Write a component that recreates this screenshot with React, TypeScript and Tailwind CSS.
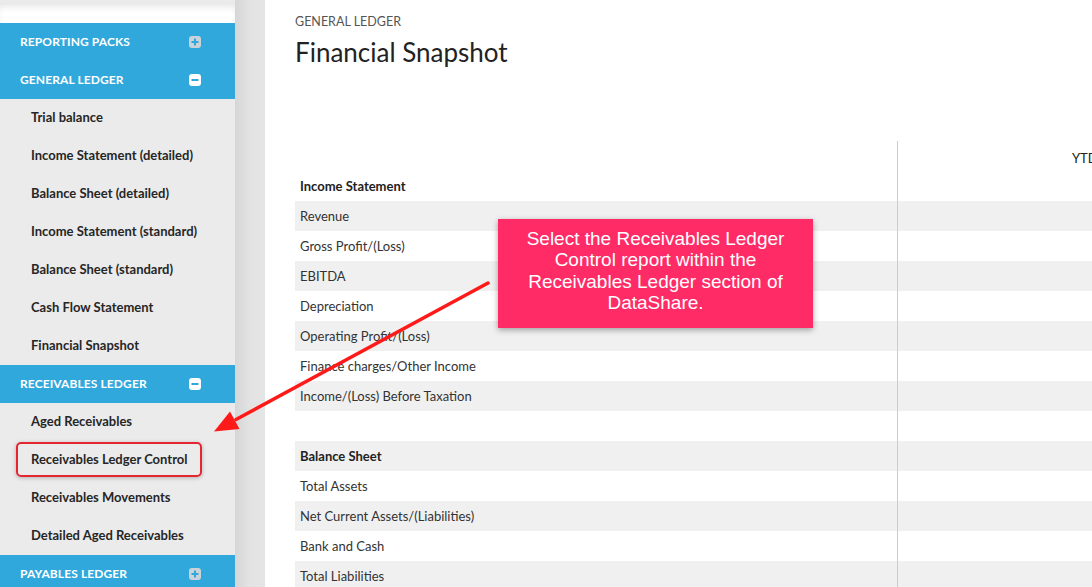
import React from 'react';

const sections = [
  { title: 'REPORTING PACKS', open: false, items: [] as string[] },
  {
    title: 'GENERAL LEDGER',
    open: true,
    items: [
      'Trial balance',
      'Income Statement (detailed)',
      'Balance Sheet (detailed)',
      'Income Statement (standard)',
      'Balance Sheet (standard)',
      'Cash Flow Statement',
      'Financial Snapshot',
    ],
  },
  {
    title: 'RECEIVABLES LEDGER',
    open: true,
    items: ['Aged Receivables', 'Receivables Ledger Control', 'Receivables Movements', 'Detailed Aged Receivables'],
  },
  { title: 'PAYABLES LEDGER', open: false, items: [] as string[] },
];

const rows: { label: string; bold?: boolean }[] = [
  { label: 'Income Statement', bold: true },
  { label: 'Revenue' },
  { label: 'Gross Profit/(Loss)' },
  { label: 'EBITDA' },
  { label: 'Depreciation' },
  { label: 'Operating Profit/(Loss)' },
  { label: 'Finance charges/Other Income' },
  { label: 'Income/(Loss) Before Taxation' },
  { label: '' },
  { label: 'Balance Sheet', bold: true },
  { label: 'Total Assets' },
  { label: 'Net Current Assets/(Liabilities)' },
  { label: 'Bank and Cash' },
  { label: 'Total Liabilities' },
];

const ToggleIcon = ({ open }: { open: boolean }) => (
  <span
    className={
      'flex h-[12px] w-[12px] items-center justify-center rounded-[3px] ' +
      (open ? 'bg-white' : 'bg-[#c9d3d9]')
    }
  >
    <svg width="10" height="10" viewBox="0 0 10 10">
      <rect x="1.5" y="4" width="7" height="2" fill="#31a8dc" />
      {!open && <rect x="4" y="1.5" width="2" height="7" fill="#31a8dc" />}
    </svg>
  </span>
);

export default function App() {
  return (
    <div className="relative flex h-[587px] w-[1092px] overflow-hidden bg-white font-['Lato',sans-serif]">
      {/* sidebar */}
      <aside className="w-[235px] shrink-0 overflow-hidden bg-[#ebebeb]">
        <div className="h-[23px] border-t-[3px] border-[#ebebeb] bg-white shadow-[inset_0_6px_8px_-4px_rgba(0,0,0,0.14)]" />
        {sections.map((s) => (
          <div key={s.title}>
            <div className="flex h-[38px] items-center justify-between bg-[#31a8dc] pl-[20px] pr-[34px]">
              <span className="text-[12px] font-bold tracking-[0.1px] text-white">{s.title}</span>
              <ToggleIcon open={s.open} />
            </div>
            {s.items.map((item) => (
              <div key={item} className="flex h-[38px] items-center pl-[31px]">
                <span className="text-[13px] font-bold text-[#262626]">{item}</span>
              </div>
            ))}
          </div>
        ))}
      </aside>

      {/* gutter */}
      <div className="w-[30px] shrink-0 bg-gradient-to-r from-[#d6d6d6] via-[#e3e3e3] to-[#e5e5e5]" />

      {/* main */}
      <main className="min-w-0 flex-1 pl-[30px] pt-[14px]">
        <div className="text-[12.5px] leading-[16px] text-[#555]">GENERAL LEDGER</div>
        <h1 className="mt-[5px] text-[26px] font-normal leading-[34px] text-[#222]">Financial Snapshot</h1>

        <div className="mt-[72px] w-[900px]">
          <div className="flex h-[30px]">
            <div className="w-[602px]" />
            <div className="flex-1 border-l border-[#cccccc] pl-[174px] pt-[8px] text-[13px] text-[#222]">YTD</div>
          </div>
          {rows.map((r, i) => (
            <div key={i} className={'flex h-[30px] ' + (i % 2 === 1 ? 'bg-[#f0f0f0]' : 'bg-white')}>
              <div
                className={
                  'flex w-[602px] items-center pl-[5px] pt-[2px] text-[13px] ' +
                  (r.bold ? 'font-bold text-[#222]' : 'text-[#333]')
                }
              >
                {r.label}
              </div>
              <div className="flex-1 border-l border-[#cccccc]" />
            </div>
          ))}
        </div>
      </main>

      {/* annotation: highlight box */}
      <div className="absolute left-[16px] top-[442px] h-[35px] w-[186px] rounded-[5px] border-2 border-[#e3262f] shadow-[0_1px_4px_rgba(0,0,0,0.25)]" />

      {/* annotation: arrow */}
      <svg className="absolute left-0 top-0" width="1092" height="587" viewBox="0 0 1092 587">
        <line x1="488" y1="283" x2="236" y2="419.5" stroke="#ff1a1a" strokeWidth="3.5" strokeLinecap="round" />
        <polygon points="214,431.5 239.5,429 230,411.5" fill="#ff1a1a" />
      </svg>

      {/* annotation: callout */}
      <div className="absolute left-[498px] top-[219px] flex h-[109px] w-[315px] items-center justify-center bg-[#ff2b67] px-[24px] pb-[6px] shadow-[0_2px_6px_rgba(0,0,0,0.35)]">
        <p className="text-center font-['Liberation_Sans',Arial,sans-serif] text-[19px] leading-[21.3px] text-white">
          Select the Receivables Ledger Control report within the Receivables Ledger section of DataShare.
        </p>
      </div>
    </div>
  );
}
